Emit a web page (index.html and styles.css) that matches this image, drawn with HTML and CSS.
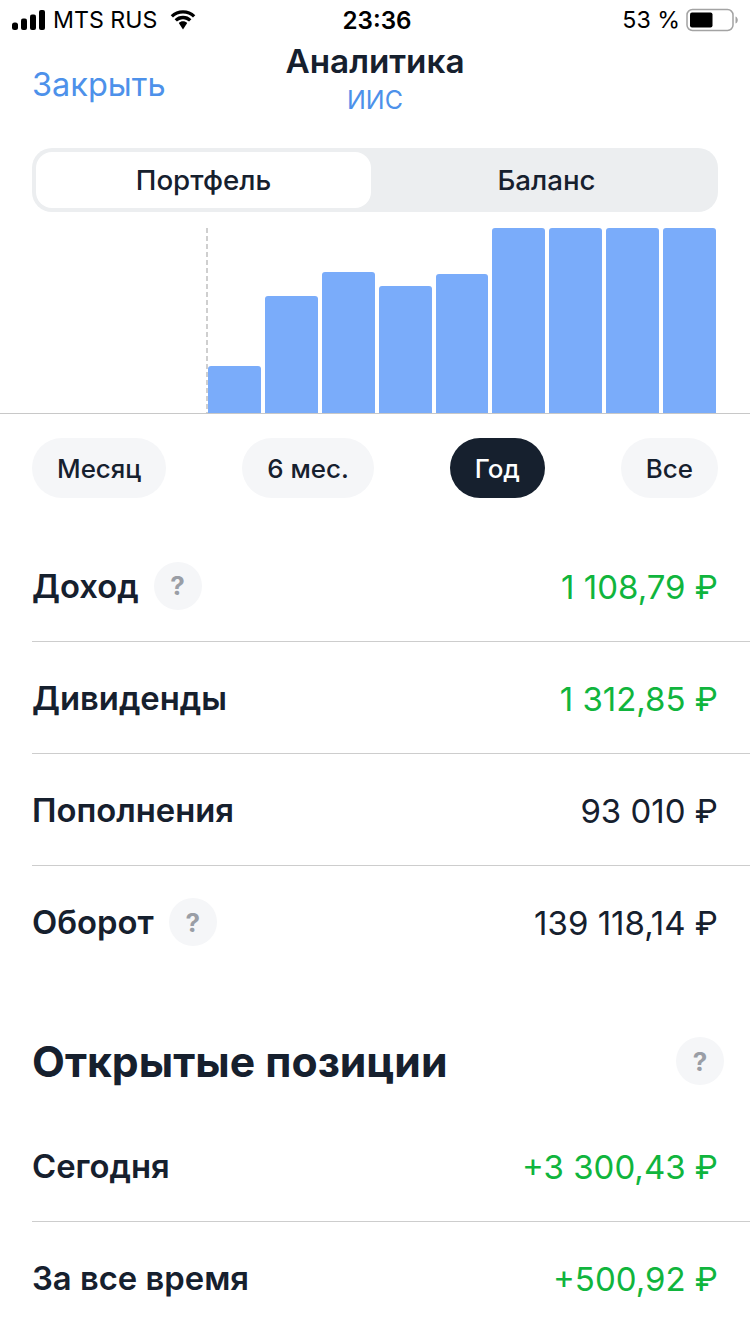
FILE: index.html
```html
<!DOCTYPE html>
<html lang="ru">
<head>
<meta charset="utf-8">
<title>Аналитика</title>
<link rel="stylesheet" href="styles.css">
</head>
<body>
<div class="status">
  <div class="status-side">
    <svg class="signal" width="33" height="20" viewBox="0 0 33 20"><rect x="0" y="12.500" width="6" height="7.500" rx="2.500"/><rect x="9" y="8.500" width="6" height="11.500" rx="2"/><rect x="18" y="4.500" width="6" height="15.500" rx="2"/><rect x="27" y="0" width="6" height="20" rx="2"/></svg>
    <span class="carrier">MTS RUS</span>
    <svg class="wifi" width="28" height="20" viewBox="0 0 28 20"><path d="M14 3.600c3.900 0 7.400 1.500 10 4l2.300-2.400A17.500 17.500 0 0 0 14 0.200 17.500 17.500 0 0 0 1.700 5.200L4 7.600c2.600-2.500 6.100-4 10-4z"/><path d="M14 9.200c2.400 0 4.500.9 6.100 2.400l2.300-2.400A12 12 0 0 0 14 5.800a12 12 0 0 0-8.400 3.400l2.300 2.400c1.600-1.500 3.700-2.400 6.100-2.400z"/><path d="M14 11.300c-1.700 0-3.100.6-4.200 1.700L14 19.500l4.200-6.500c-1.100-1.100-2.500-1.700-4.200-1.700z"/></svg>
  </div>
  <div class="clock">23:36</div>
  <div class="status-side status-right">
    <span class="percent">53 %</span>
    <svg class="battery" width="52" height="24" viewBox="0 0 52 24"><rect x="1" y="1.500" width="46" height="21" rx="5.500" fill="none" stroke="#a3a3a3" stroke-width="1.500"/><rect x="4" y="4.500" width="22.500" height="15" rx="2" fill="#000"/><path d="M49.500 8.500c1.500.5 2.300 2 2.300 3.500s-.8 3-2.300 3.500z" fill="#a3a3a3"/></svg>
  </div>
</div>

<header class="nav">
  <a class="nav-close">Закрыть</a>
  <div class="nav-title">
    <div class="nav-name">Аналитика</div>
    <div class="nav-sub">ИИС</div>
  </div>
  <div></div>
</header>

<div class="segments">
  <div class="segment segment-on">Портфель</div>
  <div class="segment segment-off">Баланс</div>
</div>

<div class="chart">
  <div class="plot">
    <div class="bar" style="height:47px"></div>
    <div class="bar" style="height:117px"></div>
    <div class="bar" style="height:141px"></div>
    <div class="bar" style="height:127px"></div>
    <div class="bar" style="height:139px"></div>
    <div class="bar" style="height:185px"></div>
    <div class="bar" style="height:185px"></div>
    <div class="bar" style="height:185px"></div>
    <div class="bar" style="height:185px"></div>
  </div>
</div>

<div class="periods">
  <div class="pill">Месяц</div>
  <div class="pill">6 мес.</div>
  <div class="pill pill-on">Год</div>
  <div class="pill">Все</div>
</div>

<section class="rows">
  <div class="row">
    <div class="row-label">Доход <span class="hint">?</span></div>
    <div class="row-value plus">1 108,79 ₽</div>
  </div>
  <div class="row">
    <div class="row-label">Дивиденды</div>
    <div class="row-value plus">1 312,85 ₽</div>
  </div>
  <div class="row">
    <div class="row-label">Пополнения</div>
    <div class="row-value">93 010 ₽</div>
  </div>
  <div class="row">
    <div class="row-label">Оборот <span class="hint">?</span></div>
    <div class="row-value">139 118,14 ₽</div>
  </div>
</section>

<div class="section-head">
  <h2 class="section-title">Открытые позиции</h2>
  <span class="hint hint-end">?</span>
</div>

<section class="rows">
  <div class="row">
    <div class="row-label">Сегодня</div>
    <div class="row-value plus">+3 300,43 ₽</div>
  </div>
  <div class="row">
    <div class="row-label">За все время</div>
    <div class="row-value plus">+500,92 ₽</div>
  </div>
</section>
</body>
</html>
```
FILE: styles.css
```css
* { box-sizing: border-box; }

html, body {
  margin: 0;
  padding: 0;
}

body {
  width: 750px;
  height: 1334px;
  overflow: hidden;
  background: #fff;
  color: #16202e;
  font-family: Inter, "Noto Sans", sans-serif;
}

/* Status bar */
.status {
  height: 40px;
  padding: 0 12px 0 12px;
  display: grid;
  grid-template-columns: 1fr auto 1fr;
  align-items: center;
  color: #000;
  font-size: 23.200px;
}

.status-side {
  display: flex;
  align-items: center;
}

.status-right { justify-content: flex-end; }

.signal { fill: #000; margin-right: 8px; }
.wifi { fill: #000; margin-left: 12px; }
.battery { margin-left: 6px; }

.clock {
  font-size: 24.200px;
  font-weight: 600;
  margin-left: 4px;
}

/* Navigation */
.nav {
  height: 108px;
  padding: 0 32px;
  display: grid;
  grid-template-columns: 1fr auto 1fr;
}

.nav-close {
  color: #4d91ea;
  font-size: 32.500px;
  line-height: 40px;
  padding-top: 25px;
}

.nav-title { text-align: center; }

.nav-name {
  font-size: 33.300px;
  font-weight: 600;
  line-height: 42px;
}

.nav-sub {
  color: #4d91ea;
  font-size: 25px;
  line-height: 36px;
}

/* Segmented control */
.segments {
  margin: 0 32px;
  height: 64px;
  padding: 4px;
  display: flex;
  background: #eceef0;
  border-radius: 20px;
}

.segment {
  flex: 1;
  display: flex;
  align-items: center;
  justify-content: center;
  font-size: 27.700px;
  font-weight: 500;
  border-radius: 16px;
}

.segment-on {
  flex: 0 0 335px;
  background: #fff;
}

.segment-off { padding-left: 8px; }

/* Bar chart */
.chart {
  height: 202px;
  padding: 16px 34px 0 206px;
  border-bottom: 1px solid #c8c8c8;
}

.plot {
  height: 100%;
  padding-left: 2px;
  display: flex;
  align-items: flex-end;
  gap: 4px;
  background: repeating-linear-gradient(to bottom, #cfcfcf 0 5px, transparent 5px 8px) left top / 2px 100% no-repeat;
}

.bar {
  flex: 1;
  background: #7aacfa;
  border-radius: 3px 3px 0 0;
}

/* Period selector */
.periods {
  margin-top: 24px;
  padding: 0 32px;
  display: flex;
  justify-content: space-between;
}

.pill {
  height: 60px;
  padding: 0 25px;
  display: flex;
  align-items: center;
  background: #f5f6f8;
  border-radius: 30px;
  font-size: 25.900px;
  font-weight: 550;
}

.pill-on {
  background: #16202e;
  color: #fff;
}

/* Value rows */
.rows { margin-top: 32px; }

.row {
  height: 112px;
  margin-left: 32px;
  padding-right: 32px;
  display: flex;
  align-items: center;
  justify-content: space-between;
  border-bottom: 1px solid #cdcdcd;
}

.row:last-child { border-bottom: 0; }

.row-label {
  display: flex;
  align-items: center;
  gap: 15px;
  font-size: 32.800px;
  font-weight: 600;
}

.row-value {
  padding-top: 2px;
  font-size: 33px;
  font-weight: 400;
}

.plus { color: #10b53d; }

.hint {
  width: 48px;
  height: 48px;
  flex: none;
  display: flex;
  align-items: center;
  justify-content: center;
  background: #f5f6f8;
  border-radius: 50%;
  color: #9a9ea6;
  font-size: 26px;
  font-weight: 700;
}

/* Open positions */
.section-head {
  margin-top: 59px;
  padding: 0 32px;
  height: 48px;
  display: flex;
  align-items: center;
  justify-content: space-between;
}

.section-title {
  margin: 0;
  font-size: 42.700px;
  font-weight: 700;
}

.hint-end { margin-right: -6px; }

.section-head + .rows { margin-top: 25px; }
```
